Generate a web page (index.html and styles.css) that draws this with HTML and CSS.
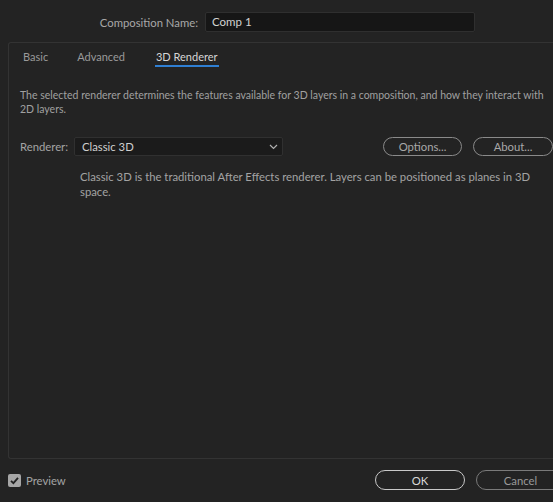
FILE: index.html
```html
<!DOCTYPE html>
<html>
<head>
<meta charset="utf-8">
<link rel="stylesheet" href="styles.css">
</head>
<body>
<div class="dialog">
  <div class="name-row">
    <label class="name-label">Composition Name:</label>
    <div class="name-input">Comp 1</div>
  </div>
  <div class="panel">
    <div class="tabs">
      <span class="tab">Basic</span>
      <span class="tab">Advanced</span>
      <span class="tab active">3D Renderer</span>
    </div>
    <p class="desc">The selected renderer determines the features available for 3D layers in a composition, and how they interact with 2D layers.</p>
    <div class="renderer-row">
      <span class="r-label">Renderer:</span>
      <div class="select">
        <span>Classic 3D</span>
        <svg class="chev" width="9" height="6" viewBox="0 0 9 6"><path d="M1 1 L4.5 4.5 L8 1" fill="none" stroke="#b0b0b0" stroke-width="1.2"/></svg>
      </div>
      <button class="btn opt">Options...</button>
      <button class="btn about">About...</button>
    </div>
    <p class="info">Classic 3D is the traditional After Effects renderer. Layers can be positioned as planes in 3D space.</p>
  </div>
  <div class="footer">
    <label class="preview">
      <span class="check"><svg width="13" height="13" viewBox="0 0 13 13"><path d="M3 6.8 L5.4 9.2 L10 3.8" fill="none" stroke="#222" stroke-width="1.8"/></svg></span>
      <span>Preview</span>
    </label>
    <div class="actions">
      <button class="btn ok">OK</button>
      <button class="btn cancel">Cancel</button>
    </div>
  </div>
</div>
</body>
</html>
```
FILE: styles.css
```css
html, body {
  margin: 0;
  padding: 0;
  background: #232323;
  width: 553px;
  height: 502px;
  overflow: hidden;
}
body {
  font-family: "Lato", "Noto Sans", sans-serif;
  font-size: 11px;
  color: #a3a3a3;
}
.dialog {
  display: flex;
  flex-direction: column;
  height: 502px;
}
.name-row {
  display: flex;
  align-items: center;
  padding-top: 12px;
  height: 20px;
}
.name-label {
  width: 198px;
  text-align: right;
  font-size: 11.3px;
  color: #a8a8a8;
}
.name-input {
  margin-left: 7px;
  width: 262px;
  height: 18px;
  line-height: 18px;
  padding-left: 6px;
  background: #161616;
  border: 1px solid #2f2f2f;
  border-radius: 2px;
  color: #d2d2d2;
  font-size: 11.5px;
}
.panel {
  margin-top: 10px;
  margin-left: 8px;
  width: 560px;
  height: 417px;
  border: 1px solid #333333;
  border-right: none;
  border-radius: 3px 0 0 3px;
  box-sizing: border-box;
}
.tabs {
  display: flex;
  padding-left: 14px;
  height: 24px;
  padding-top: 7px;
}
.tab {
  font-size: 11px;
  color: #9a9a9a;
  margin-right: 29px;
  height: 15px;
  line-height: 13px;
}
.tab:nth-child(2) { margin-right: 31px; }
.tab.active {
  color: #d6d6d6;
  border-bottom: 2px solid #2f7fd3;
  padding: 0 1px;
  margin-left: -1px;
}
.desc {
  margin: 14px 0 0 11px;
  width: 525px;
  font-size: 10.5px;
  line-height: 14px;
  color: #a0a0a0;
}
.renderer-row {
  display: flex;
  align-items: center;
  margin-top: 20px;
  padding-left: 11px;
  height: 20px;
}
.r-label {
  font-size: 11.3px;
  color: #a3a3a3;
  width: 54px;
}
.select {
  width: 209px;
  height: 19px;
  box-sizing: border-box;
  background: #1b1b1b;
  border: 1px solid #303030;
  border-radius: 2px;
  display: flex;
  align-items: center;
  justify-content: space-between;
  padding: 0 4px 0 7px;
  color: #d0d0d0;
  font-size: 11.3px;
}
.chev { margin-top: 1px; }
.btn {
  font-family: inherit;
  background: transparent;
  border: 1px solid #8a8a8a;
  border-radius: 10px;
  color: #a8a8a8;
  font-size: 11.3px;
  height: 19px;
  padding: 0;
  box-sizing: border-box;
}
.opt { margin-left: 100px; width: 79px; }
.about { margin-left: 11px; width: 80px; }
.info {
  margin: 13px 0 0 71px;
  width: 465px;
  font-size: 11.3px;
  line-height: 15px;
  color: #a3a3a3;
}
.footer {
  display: flex;
  align-items: center;
  justify-content: space-between;
  margin-top: 10px;
  padding-left: 8px;
  height: 22px;
}
.preview {
  display: flex;
  align-items: center;
  font-size: 11.3px;
  color: #a3a3a3;
}
.check {
  width: 13px;
  height: 13px;
  background: #a6a6a6;
  border-radius: 2px;
  margin-right: 5px;
  display: flex;
}
.actions {
  display: flex;
  margin-right: -12px;
}
.btn.ok {
  width: 90px;
  height: 20px;
  color: #d8d8d8;
  border-color: #c8c8c8;
  border-width: 1.5px;
}
.btn.cancel {
  width: 89px;
  height: 20px;
  margin-left: 11px;
  color: #9a9a9a;
  border-color: #7a7a7a;
}
```
